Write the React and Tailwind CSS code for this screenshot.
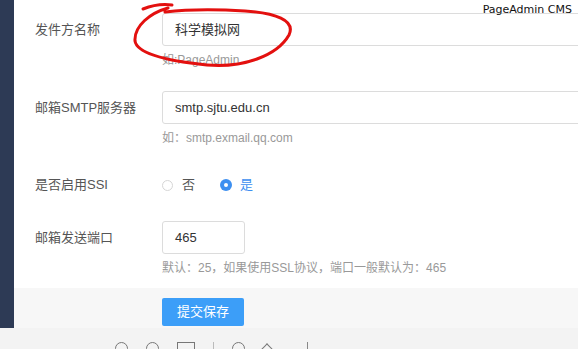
import React from 'react';

const labelCls = "w-[148px] shrink-0 pl-[21px] text-[13px] text-[#555]";
const inputCls = "h-[33px] border border-[#dcdcdc] rounded-[3px] bg-white px-[12px] text-[13px] text-[#333] flex items-center";
const hintCls = "mt-[7px] h-[14px] text-[12px] leading-[14px] text-[#999]";

const App = () => {
    return (
        <div className="relative w-[578px] h-[349px] overflow-hidden bg-[#f3f3f3] font-['Liberation_Sans','Noto_Sans_CJK_SC',sans-serif]">
            <div className="flex h-[328px]">
                {/* Sidebar */}
                <div className="w-[14px] shrink-0 bg-[#2d3a55]"></div>

                <div className="flex-1 flex flex-col">
                    {/* Form */}
                    <div className="h-[288px] bg-white pt-[13px]">
                        <div className="flex">
                            <div className={`${labelCls} leading-[33px]`}>发件方名称</div>
                            <div className="flex-1">
                                <div className={`${inputCls} -mr-[4px]`}>科学模拟网</div>
                                <div className={hintCls}>如:PageAdmin</div>
                            </div>
                        </div>

                        <div className="flex mt-[24px]">
                            <div className={`${labelCls} leading-[33px]`}>邮箱SMTP服务器</div>
                            <div className="flex-1">
                                <div className={`${inputCls} -mr-[4px]`}>smtp.sjtu.edu.cn</div>
                                <div className={hintCls}>如：smtp.exmail.qq.com</div>
                            </div>
                        </div>

                        <div className="flex items-center mt-[30px] h-[20px]">
                            <div className={labelCls}>是否启用SSI</div>
                            <div className="flex items-center text-[13px]">
                                <span className="w-[11px] h-[11px] rounded-full border border-[#d6d6d6] bg-white"></span>
                                <span className="ml-[9px] text-[#555]">否</span>
                                <span className="ml-[25px] w-[12px] h-[12px] rounded-full bg-[#3d8ff0] flex items-center justify-center">
                                    <span className="w-[4px] h-[4px] rounded-full bg-white"></span>
                                </span>
                                <span className="ml-[8px] text-[#3d8ff0]">是</span>
                            </div>
                        </div>

                        <div className="flex mt-[26px]">
                            <div className={`${labelCls} leading-[33px]`}>邮箱发送端口</div>
                            <div className="flex-1">
                                <div className={`${inputCls} w-[83px]`}>465</div>
                                <div className={hintCls}>默认：25，如果使用SSL协议，端口一般默认为：465</div>
                            </div>
                        </div>
                    </div>

                    {/* Footer */}
                    <div className="flex-1 bg-[#f7f7f7] pl-[148px] pt-[10px]">
                        <button className="w-[82px] h-[28px] bg-[#3c9ef8] text-white text-[13px] rounded-[2px]">提交保存</button>
                    </div>
                </div>
            </div>

            {/* Toolbar icons (cut off) */}
            <div className="flex items-start pl-[115px] pt-[14px] gap-[18px] text-[#666]">
                <span className="w-[13px] h-[13px] rounded-full border border-[#777]"></span>
                <span className="w-[13px] h-[13px] rounded-full border border-[#777]"></span>
                <span className="w-[18px] h-[12px] border border-[#777]"></span>
                <span className="w-px h-[12px] bg-[#bbb]"></span>
                <span className="w-[13px] h-[13px] rounded-full border border-[#777]"></span>
                <span className="w-[8px] h-[8px] border-l border-t border-[#777] rotate-45 mt-[3px]"></span>
                <span className="ml-[18px] w-px h-[12px] bg-[#888]"></span>
            </div>

            {/* Hand-drawn red annotation */}
            <svg className="absolute left-0 top-0 pointer-events-none" width="578" height="349">
                <path
                    d="M143 9 Q158 3 172 5"
                    fill="none" stroke="#e3100f" strokeWidth="3" strokeLinecap="round"
                />
                <path
                    d="M168 8 C150 13 134 26 135 41 C137 54 168 61 207 65 C243 68 277 56 289 35 C296 20 275 13 245 11 C215 9 190 9 165 12"
                    fill="none" stroke="#e3100f" strokeWidth="3" strokeLinecap="round"
                />
            </svg>

            <div className="absolute top-[3px] right-[6px] text-[11px] leading-[13px] text-[#111] font-['DejaVu_Sans',sans-serif]">PageAdmin CMS</div>
        </div>
    );
};

export default App;
